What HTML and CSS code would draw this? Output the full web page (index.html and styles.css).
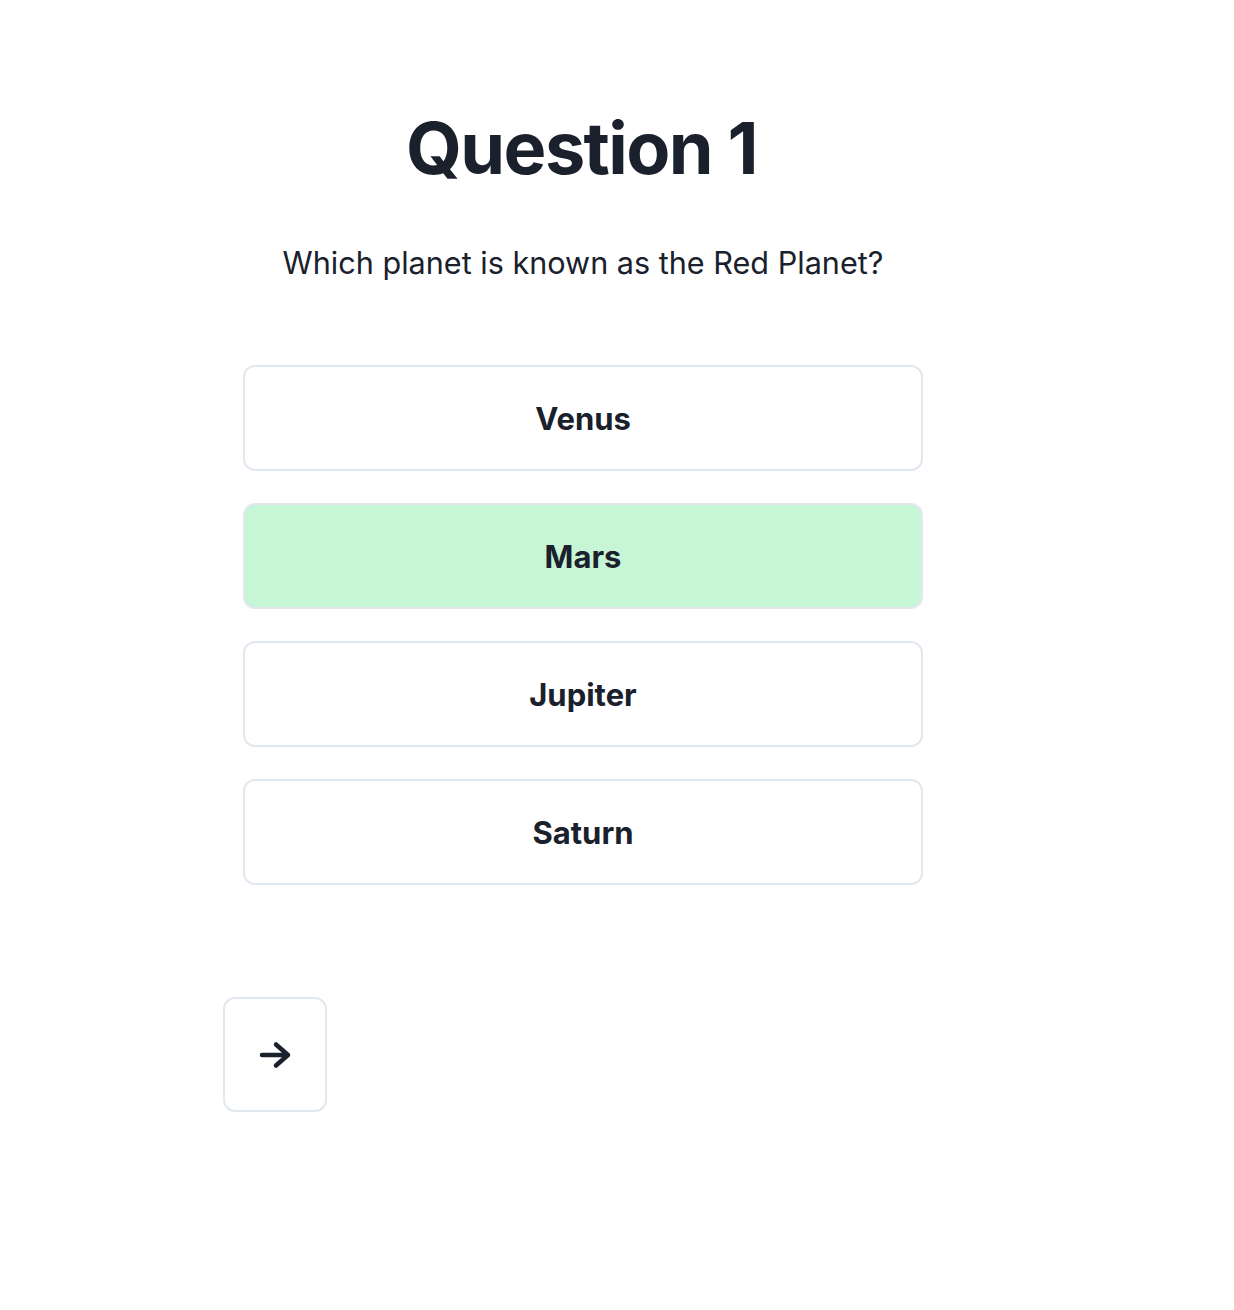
FILE: index.html
```html
<!DOCTYPE html>
<html lang="en">

<head>
    <meta charset="UTF-8">
    <meta name="viewport" content="width=device-width, initial-scale=1.0">
    <title>Quiz</title>
    <link rel="stylesheet" href="styles.css">
</head>

<body>
    <div class="quiz">
        <h1 class="quiz_title">Question 1</h1>
        <p class="quiz_question">Which planet is known as the Red Planet?</p>

        <div class="options">
            <button class="option">Venus</button>
            <button class="option option_correct">Mars</button>
            <button class="option">Jupiter</button>
            <button class="option">Saturn</button>
        </div>

        <div class="nav">
            <button class="next" aria-label="Next question">
                <svg width="34" height="28" viewBox="0 0 34 28" fill="none" stroke="currentColor"
                    stroke-width="4.5" stroke-linecap="round" stroke-linejoin="round">
                    <path d="M4 14h26M18 3.5l12 10.5-12 10.5" />
                </svg>
            </button>
        </div>
    </div>
</body>

</html>
```

FILE: styles.css
```css
/* Reset some default browser styles */
body,
html {
    margin: 0;
    padding: 0;
    font-family: 'Inter', 'Noto Sans', sans-serif;
    background-color: #ffffff;
    color: #1a202c;
}

.quiz {
    width: 720px;
    margin-left: 223px;
    padding-top: 104px;
}

.quiz_title {
    margin: 0;
    font-size: 72px;
    line-height: 88px;
    font-weight: 700;
    letter-spacing: -1.6px;
    text-indent: -3px;
    text-align: center;
}

.quiz_question {
    margin: 51px 0 0;
    font-size: 30.6px;
    line-height: 40px;
    font-weight: 400;
    text-align: center;
}

.options {
    display: flex;
    flex-direction: column;
    gap: 32px;
    padding: 0 20px;
    margin-top: 82px;
}

.option {
    height: 106px;
    font-family: inherit;
    font-size: 31px;
    font-weight: 700;
    color: #1a202c;
    background: #ffffff;
    border: 2px solid #e2e8f0;
    border-radius: 12px;
    cursor: pointer;
}

.option_correct {
    background: #c6f6d5;
}

.nav {
    margin-top: 112px;
}

.next {
    width: 104px;
    height: 115px;
    display: flex;
    align-items: center;
    justify-content: center;
    color: #1a202c;
    background: #ffffff;
    border: 2px solid #e2e8f0;
    border-radius: 12px;
    cursor: pointer;
}
```
